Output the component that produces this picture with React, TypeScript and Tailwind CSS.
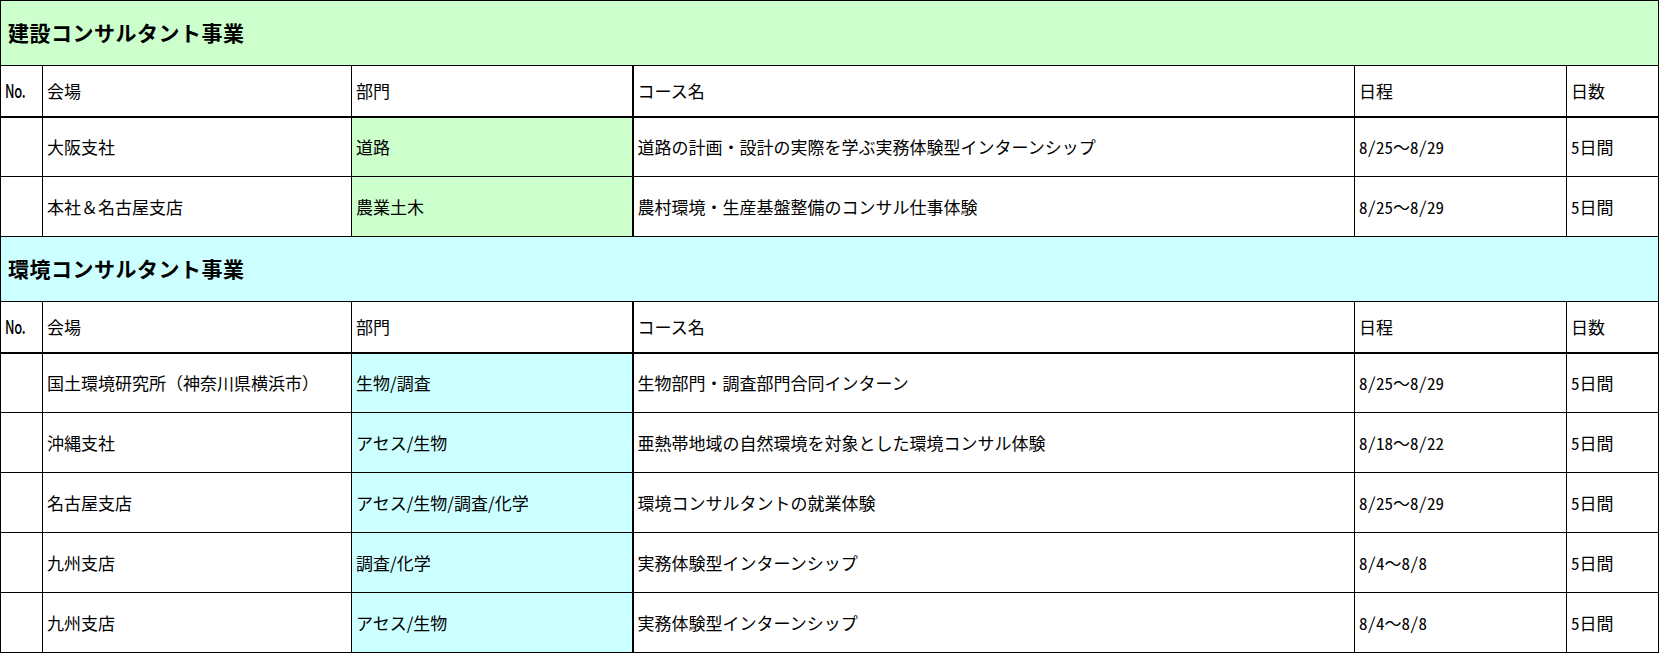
const font = "font-['Noto_Sans_CJK_JP','Noto_Sans',sans-serif]";

type Row = { venue: string; dept: string; course: string; dates: string; days: string };

const construction: Row[] = [
  { venue: "大阪支社", dept: "道路", course: "道路の計画・設計の実際を学ぶ実務体験型インターンシップ", dates: "8/25～8/29", days: "5日間" },
  { venue: "本社＆名古屋支店", dept: "農業土木", course: "農村環境・生産基盤整備のコンサル仕事体験", dates: "8/25～8/29", days: "5日間" },
];

const environment: Row[] = [
  { venue: "国土環境研究所（神奈川県横浜市）", dept: "生物/調査", course: "生物部門・調査部門合同インターン", dates: "8/25～8/29", days: "5日間" },
  { venue: "沖縄支社", dept: "アセス/生物", course: "亜熱帯地域の自然環境を対象とした環境コンサル体験", dates: "8/18～8/22", days: "5日間" },
  { venue: "名古屋支店", dept: "アセス/生物/調査/化学", course: "環境コンサルタントの就業体験", dates: "8/25～8/29", days: "5日間" },
  { venue: "九州支店", dept: "調査/化学", course: "実務体験型インターンシップ", dates: "8/4～8/8", days: "5日間" },
  { venue: "九州支店", dept: "アセス/生物", course: "実務体験型インターンシップ", dates: "8/4～8/8", days: "5日間" },
];

const cell = "border border-black px-[4px] align-middle whitespace-nowrap";

// half-width digits, but keep the full-width wave dash
function Dates({ value }: { value: string }) {
  const [from, to] = value.split("～");
  return (
    <>
      <span className="[font-feature-settings:'hwid']">{from}</span>
      <span>～</span>
      <span className="[font-feature-settings:'hwid']">{to}</span>
    </>
  );
}

function Section({ title, bg, rows }: { title: string; bg: string; rows: Row[] }) {
  return (
    <>
      {/* section title */}
      <tr className="h-[65px]">
        <td colSpan={6} className={`border border-black ${bg} pl-[7px] text-[21px] font-bold tracking-[0.5px]`}>
          {title}
        </td>
      </tr>

      {/* column headers */}
      <tr className="h-[51px]">
        <td className={`${cell} border-b-2 px-[2px]`}>
          <span className="inline-block origin-left scale-x-[0.72] text-[18px] font-medium tracking-tight">No.</span>
        </td>
        <td className={`${cell} border-b-2`}>会場</td>
        <td className={`${cell} border-b-2`}>部門</td>
        <td className={`${cell} border-b-2 border-l-2`}>コース名</td>
        <td className={`${cell} border-b-2`}>日程</td>
        <td className={`${cell} border-b-2`}>日数</td>
      </tr>

      {rows.map((r, i) => (
        <tr key={i} className="h-[60px]">
          <td className={cell}></td>
          <td className={cell}>{r.venue}</td>
          <td className={`${cell} ${bg}`}>{r.dept}</td>
          <td className={`${cell} border-l-2`}>{r.course}</td>
          <td className={`${cell} px-[3px]`}>
            <Dates value={r.dates} />
          </td>
          <td className={`${cell} [font-feature-settings:'hwid']`}>{r.days}</td>
        </tr>
      ))}
    </>
  );
}

export default function App() {
  return (
    <div className={`min-h-screen bg-white ${font} text-[17px] text-black`}>
      <table className="w-[1659px] table-fixed border-collapse">
        <colgroup>
          <col className="w-[42px]" />
          <col className="w-[309px]" />
          <col className="w-[281px]" />
          <col className="w-[722px]" />
          <col className="w-[212px]" />
          <col className="w-[92px]" />
        </colgroup>
        <tbody>
          <Section title="建設コンサルタント事業" bg="bg-[#ccffcc]" rows={construction} />
          <Section title="環境コンサルタント事業" bg="bg-[#ccffff]" rows={environment} />
        </tbody>
      </table>
    </div>
  );
}
